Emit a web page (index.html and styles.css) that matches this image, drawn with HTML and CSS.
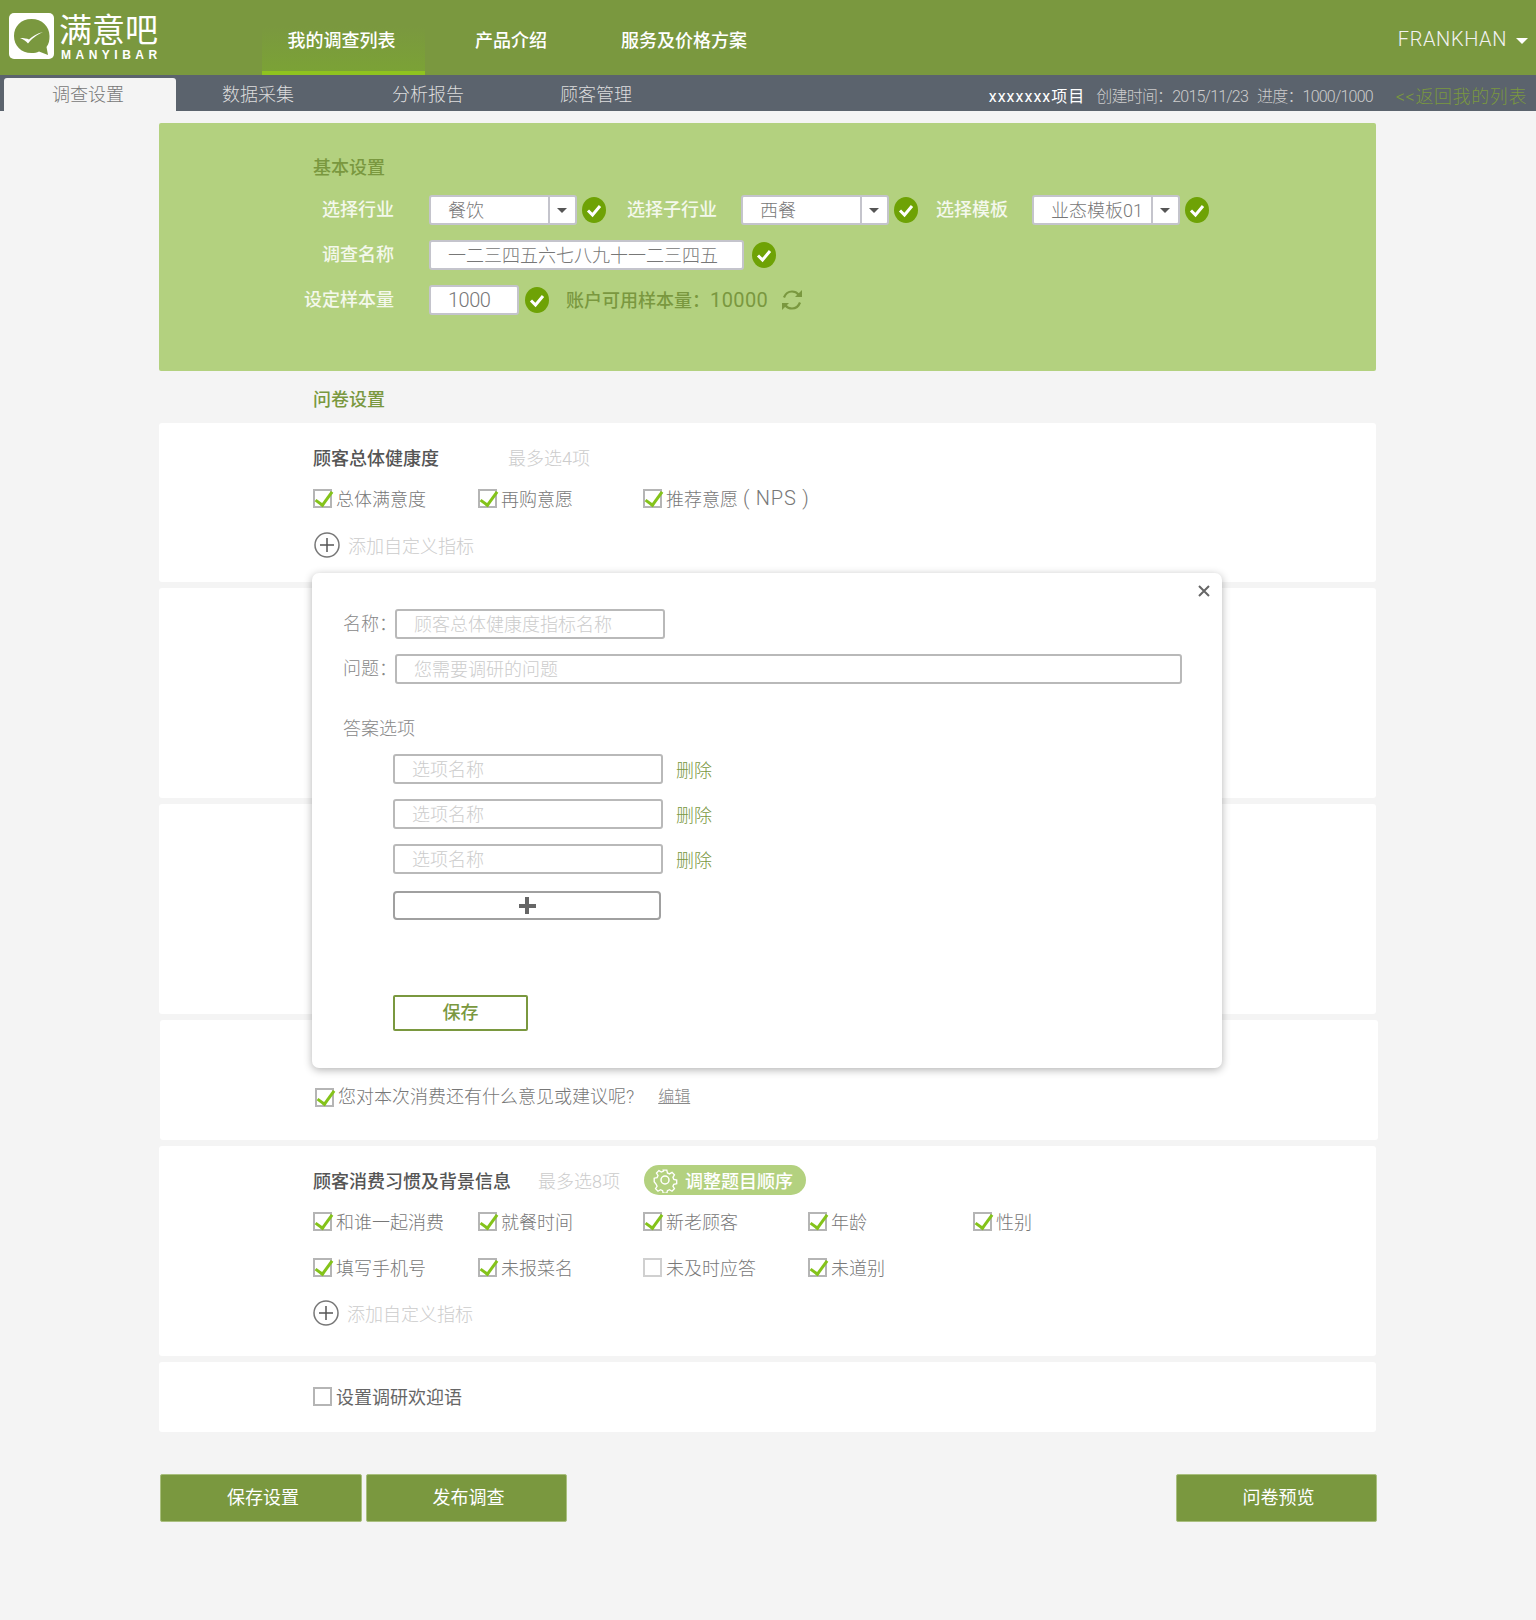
FILE: index.html
```html
<!DOCTYPE html>
<html>
<head lang="zh">
    <meta charset="UTF-8">
    <title>满意吧 - 调查设置</title>
    <link rel="stylesheet" href="styles.css">
</head>
<body>
    <div class="header">
        <div class="logo">
            <svg class="logo-icon" width="45" height="46" viewBox="0 0 45 46">
                <rect width="45" height="46" rx="5" fill="#fff"/>
                <path d="M22.500 6C12 6 5 13.500 5 23s7 17 17.500 17c3 0 5.500-.5 7.500-1.500l9 3.500-1.500-8C40 31 40.500 27 40.500 23 40.500 13.500 33 6 22.500 6z" fill="#7a983f"/>
                <path d="M11 25c3 1 6 3 8 5.500 4-5 8-8 15-11.500-6 1.500-10 4-14 7.500-2-1-5-1.500-9-1.500z" fill="#fff"/>
            </svg>
            <div class="logo-text">
                <div class="logo-cn">满意吧</div>
                <div class="logo-en">MANYIBAR</div>
            </div>
        </div>
        <ul class="nav">
            <li class="nav-item selected">我的调查列表</li>
            <li class="nav-item">产品介绍</li>
            <li class="nav-item">服务及价格方案</li>
        </ul>
        <div class="user">FRANKHAN<span class="user-caret"></span></div>
    </div>

    <div class="subnav">
        <ul class="tabs">
            <li class="tab selected">调查设置</li>
            <li class="tab">数据采集</li>
            <li class="tab">分析报告</li>
            <li class="tab">顾客管理</li>
        </ul>
        <div class="project">
            <span class="project-name">xxxxxxx项目</span>
            <span class="project-date">创建时间：2015/11/23</span>
            <span class="project-progress">进度：1000/1000</span>
            <span class="project-back">&lt;&lt;返回我的列表</span>
        </div>
    </div>

    <div class="main">
        <div class="basic">
            <div class="basic-title">基本设置</div>
            <div class="basic-row">
                <span class="field-label">选择行业</span>
                <div class="select"><span class="select-text">餐饮</span><span class="select-btn"></span></div>
                <svg class="ok" width="24" height="26" viewBox="0 0 24 26"><ellipse cx="12" cy="13" rx="12" ry="13" fill="#6ea205"/><path d="M6 13.500l4.500 4.500L18 9" fill="none" stroke="#fff" stroke-width="3"/></svg>
                <span class="field-label-inline sub">选择子行业</span>
                <div class="select"><span class="select-text">西餐</span><span class="select-btn"></span></div>
                <svg class="ok" width="24" height="26" viewBox="0 0 24 26"><ellipse cx="12" cy="13" rx="12" ry="13" fill="#6ea205"/><path d="M6 13.500l4.500 4.500L18 9" fill="none" stroke="#fff" stroke-width="3"/></svg>
                <span class="field-label-inline tpl">选择模板</span>
                <div class="select"><span class="select-text">业态模板01</span><span class="select-btn"></span></div>
                <svg class="ok" width="24" height="26" viewBox="0 0 24 26"><ellipse cx="12" cy="13" rx="12" ry="13" fill="#6ea205"/><path d="M6 13.500l4.500 4.500L18 9" fill="none" stroke="#fff" stroke-width="3"/></svg>
            </div>
            <div class="basic-row">
                <span class="field-label">调查名称</span>
                <div class="text-box name-box">一二三四五六七八九十一二三四五</div>
                <svg class="ok" width="24" height="26" viewBox="0 0 24 26"><ellipse cx="12" cy="13" rx="12" ry="13" fill="#6ea205"/><path d="M6 13.500l4.500 4.500L18 9" fill="none" stroke="#fff" stroke-width="3"/></svg>
            </div>
            <div class="basic-row">
                <span class="field-label">设定样本量</span>
                <div class="text-box size-box">1000</div>
                <svg class="ok" width="24" height="26" viewBox="0 0 24 26"><ellipse cx="12" cy="13" rx="12" ry="13" fill="#6ea205"/><path d="M6 13.500l4.500 4.500L18 9" fill="none" stroke="#fff" stroke-width="3"/></svg>
                <span class="available">账户可用样本量：<span class="available-num">10000</span></span>
                <svg class="refresh" width="22" height="24" viewBox="0 0 22 24">
                    <path d="M3 9.500C4.500 5.500 7.500 3.500 11 3.500c2.500 0 5 1 6.500 3" fill="none" stroke="#7a983f" stroke-width="2.200"/>
                    <path d="M21 2v7h-7z" fill="#7a983f"/>
                    <path d="M19 14.500c-1.500 4-4.500 6-8 6-2.500 0-5-1-6.500-3" fill="none" stroke="#7a983f" stroke-width="2.200"/>
                    <path d="M1 22v-7h7z" fill="#7a983f"/>
                </svg>
            </div>
        </div>

        <div class="section-title">问卷设置</div>

        <div class="card card-health">
            <div class="card-head">
                <span class="card-title">顾客总体健康度</span>
                <span class="card-hint hint-health">最多选4项</span>
            </div>
            <div class="checks">
                <span class="check on">总体满意度</span>
                <span class="check on">再购意愿</span>
                <span class="check on">推荐意愿<span class="nps">( NPS )</span></span>
            </div>
            <div class="add">
                <svg width="26" height="26" viewBox="0 0 26 26"><circle cx="13" cy="13" r="12" fill="none" stroke="#777" stroke-width="1.500"/><path d="M6 13h14M13 6v14" stroke="#555" stroke-width="1.500"/></svg>
                <span class="add-text">添加自定义指标</span>
            </div>
        </div>
        <div class="card card-blank"></div>
        <div class="card card-blank"></div>
        <div class="card card-open">
            <span class="check on">您对本次消费还有什么意见或建议呢?</span>
            <span class="edit">编辑</span>
        </div>
        <div class="card card-habit">
            <div class="card-head">
                <span class="card-title">顾客消费习惯及背景信息</span>
                <span class="card-hint hint-habit">最多选8项</span>
                <span class="pill">
                    <svg width="26" height="26" viewBox="0 0 26 26">
                        <path d="M11 2h4l.7 3.200 2.300 1 2.800-1.700 2.700 2.800-1.700 2.700 1 2.300 3.200.7v4l-3.200.7-1 2.300 1.700 2.700-2.700 2.800-2.800-1.700-2.300 1-.7 2.900h-4l-.7-2.900-2.300-1-2.800 1.700-2.700-2.800 1.700-2.700-1-2.300L1 15v-4l3.200-.7 1-2.300-1.700-2.700 2.700-2.800 2.800 1.700 2.300-1z" fill="none" stroke="#fff" stroke-width="1.500" transform="translate(1.300 1.300) scale(.9)"/>
                        <circle cx="13" cy="13" r="4" fill="none" stroke="#fff" stroke-width="1.500"/>
                    </svg>
                    调整题目顺序
                </span>
            </div>
            <div class="checks">
                <span class="check on">和谁一起消费</span>
                <span class="check on">就餐时间</span>
                <span class="check on">新老顾客</span>
                <span class="check on">年龄</span>
                <span class="check on">性别</span>
            </div>
            <div class="checks checks-second">
                <span class="check on">填写手机号</span>
                <span class="check on">未报菜名</span>
                <span class="check off">未及时应答</span>
                <span class="check on">未道别</span>
            </div>
            <div class="add add-habit">
                <svg width="26" height="26" viewBox="0 0 26 26"><circle cx="13" cy="13" r="12" fill="none" stroke="#777" stroke-width="1.500"/><path d="M6 13h14M13 6v14" stroke="#555" stroke-width="1.500"/></svg>
                <span class="add-text">添加自定义指标</span>
            </div>
        </div>
        <div class="card card-welcome">
            <span class="check plain">设置调研欢迎语</span>
        </div>

        <div class="actions">
            <div class="btn">保存设置</div>
            <div class="btn">发布调查</div>
            <div class="btn btn-right">问卷预览</div>
        </div>
    </div>

    <div class="modal">
        <svg class="modal-close" width="12" height="12" viewBox="0 0 12 12"><path d="M1 1l10 10M11 1L1 11" stroke="#666" stroke-width="2"/></svg>
        <div class="modal-row">
            <span class="modal-label">名称：</span>
            <div class="modal-input short">顾客总体健康度指标名称</div>
        </div>
        <div class="modal-row">
            <span class="modal-label">问题：</span>
            <div class="modal-input long">您需要调研的问题</div>
        </div>
        <div class="modal-sub">答案选项</div>
        <div class="option">
            <div class="modal-input short">选项名称</div>
            <span class="option-del">删除</span>
        </div>
        <div class="option">
            <div class="modal-input short">选项名称</div>
            <span class="option-del">删除</span>
        </div>
        <div class="option">
            <div class="modal-input short">选项名称</div>
            <span class="option-del">删除</span>
        </div>
        <div class="option-add"><span class="plus"></span></div>
        <div class="save">保存</div>
    </div>
</body>
</html>
```

FILE: styles.css
```css
*,*::before,*::after{
    margin: 0;
    padding: 0;
    box-sizing: border-box;
}
ul{
    list-style: none;
}
html,body{
    height: 1620px;
}
body{
    background: #f4f4f4;
    font-family: Roboto, "Noto Sans CJK SC", sans-serif;
    font-weight: 300;
    font-size: 18px;
    color: #777;
    position: relative;
    overflow: hidden;
}

/* header */
.header{
    height: 75px;
    background: #7a983f;
    display: flex;
    position: relative;
}
.logo{
    display: flex;
    padding: 13px 0 0 9px;
    width: 262px;
}
.logo-icon{
    flex: none;
}
.logo-text{
    margin-left: 5px;
    color: #fff;
    margin-top: -4px;
}
.logo-cn{
    font-size: 33px;
    line-height: 44px;
    font-weight: 400;
    white-space: nowrap;
}
.logo-en{
    font-size: 12px;
    line-height: 14px;
    font-weight: 700;
    letter-spacing: 4.500px;
    margin-top: -5px;
    padding-left: 2px;
    font-family: "Liberation Sans", sans-serif;
}
.nav{
    display: flex;
    height: 75px;
}
.nav-item{
    color: #fff;
    font-weight: 500;
    line-height: 82px;
    white-space: nowrap;
    margin-right: 74px;
}
.nav-item.selected{
    width: 163px;
    margin: 26px 50px 0 0;
    height: 49px;
    line-height: 30px;
    text-align: center;
    padding-right: 4px;
    background: linear-gradient(#7a983f, #7ba236);
    border-bottom: 4px solid #8fc31f;
}
.user{
    position: absolute;
    right: 8px;
    top: 25px;
    color: #f2f2f2;
    font-size: 20px;
    letter-spacing: .6px;
    line-height: 28px;
    display: flex;
    align-items: center;
}
.user-caret{
    margin-left: 9px;
    margin-top: 4px;
    border-left: 6px solid transparent;
    border-right: 6px solid transparent;
    border-top: 6px solid #fff;
}

/* sub nav */
.subnav{
    height: 36px;
    background: #5b636d;
    display: flex;
    justify-content: space-between;
    padding: 3px 9px 0 4px;
}
.tabs{
    display: flex;
}
.tab{
    width: 170px;
    text-align: center;
    color: #ddd;
    line-height: 33px;
}
.tab:last-child{
    width: 166px;
}
.tab.selected{
    width: 172px;
    padding-right: 4px;
    background: #f4f4f4;
    color: #777;
    border-radius: 3px 3px 0 0;
}
.tab.selected + .tab{
    margin-left: -3px;
}
.project{
    display: flex;
    align-items: center;
    height: 33px;
    font-size: 16px;
    color: #ccc;
    white-space: nowrap;
}
.project-name{
    color: #fff;
    font-weight: 400;
    letter-spacing: 1px;
    margin-right: 11px;
}
.project-date{
    letter-spacing: -.8px;
    margin-right: 9px;
}
.project-progress{
    letter-spacing: -.8px;
    margin-right: 23px;
}
.project-back{
    font-size: 18px;
    letter-spacing: .6px;
    color: #7a983f;
}

/* main */
.main{
    width: 1217px;
    margin-left: 159px;
    padding-top: 12px;
}
.basic{
    height: 248px;
    background: #b3d17f;
    border-radius: 2px;
    padding-top: 32px;
}
.basic-title{
    padding-left: 154px;
    color: #7a983f;
    font-weight: 500;
    line-height: 25px;
    margin-bottom: 15px;
}
.basic-row{
    display: flex;
    align-items: center;
    height: 30px;
    line-height: 30px;
    margin-bottom: 15px;
}
.field-label{
    width: 235px;
    text-align: right;
    margin-right: 35px;
    color: #f4f8ec;
    font-weight: 500;
}
.field-label-inline{
    color: #f4f8ec;
    font-weight: 500;
    white-space: nowrap;
}
.sub{
    margin: 0 24px 0 21px;
}
.tpl{
    margin: 0 24px 0 18px;
}
.select{
    width: 148px;
    height: 30px;
    background: #fff;
    border: 2px solid #c4c4cc;
    border-radius: 3px;
    display: flex;
    line-height: 27px;
}
.select-text{
    flex: 1;
    padding-left: 17px;
    white-space: nowrap;
    overflow: hidden;
}
.select-btn{
    width: 27px;
    border-left: 2px solid #c4c4cc;
    position: relative;
}
.select-btn::after{
    content: "";
    position: absolute;
    left: 7px;
    top: 11px;
    border-left: 5px solid transparent;
    border-right: 5px solid transparent;
    border-top: 5px solid #555;
}
.ok{
    margin-left: 5px;
    flex: none;
}
.text-box{
    height: 30px;
    background: #fff;
    border: 2px solid #c4c4cc;
    border-radius: 3px;
    line-height: 27px;
    padding-left: 17px;
    white-space: nowrap;
}
.name-box{
    width: 315px;
    margin-right: 3px;
}
.size-box{
    width: 90px;
    margin-right: 1px;
    font-size: 20px;
    letter-spacing: -.5px;
}
.available{
    margin-left: 17px;
    color: #7a983f;
    font-weight: 500;
    white-space: nowrap;
}
.available-num{
    font-size: 20px;
    font-weight: 400;
    letter-spacing: .4px;
}
.refresh{
    margin-left: 13px;
}
.section-title{
    padding-left: 154px;
    height: 52px;
    line-height: 58px;
    color: #7a983f;
    font-weight: 500;
}

/* cards */
.card{
    background: #fff;
    border-radius: 3px;
    margin-bottom: 6px;
    padding-left: 154px;
}
.card-head{
    display: flex;
    align-items: center;
    height: 30px;
}
.card-title{
    color: #555;
    font-weight: 500;
    white-space: nowrap;
}
.card-hint{
    color: #ccc;
    white-space: nowrap;
}
.hint-health{
    margin-left: 69px;
}
.hint-habit{
    margin-left: 27px;
}
.card-health{
    height: 159px;
    padding-top: 19px;
}
.card-blank{
    height: 210px;
}
.card-open{
    height: 120px;
    width: 1218px;
    margin-left: 1px;
    padding: 61px 0 0 155px;
    display: flex;
    align-items: flex-start;
    line-height: 32px;
}
.card-habit{
    height: 210px;
    padding-top: 19px;
}
.card-welcome{
    height: 70px;
    padding-top: 18px;
}
.checks{
    display: flex;
    margin-top: 10px;
}
.checks-second{
    margin-top: 14px;
}
.check{
    display: flex;
    align-items: center;
    height: 32px;
    padding-left: 23px;
    position: relative;
    white-space: nowrap;
}
.checks .check{
    width: 165px;
}
.nps{
    margin-left: 5px;
    font-size: 20px;
    letter-spacing: .8px;
}
.check::before{
    content: "";
    position: absolute;
    left: 0;
    top: 7px;
    width: 19px;
    height: 19px;
    border: 2px solid #b5b5b5;
    background: #fff;
}
.check.off::before{
    border-color: #d0d0d0;
}
.check.on::after{
    content: "";
    position: absolute;
    left: 6px;
    top: 6px;
    width: 10px;
    height: 18px;
    border-right: 3px solid #84c31a;
    border-bottom: 3px solid #84c31a;
    transform: rotate(36deg);
}
.plain{
    color: #666;
    font-weight: 400;
}
.edit{
    margin-left: 24px;
    font-size: 16px;
    color: #888;
    text-decoration: underline;
}
.add{
    display: flex;
    align-items: center;
    height: 30px;
    margin-top: 16px;
    padding-left: 1px;
}
.add-habit{
    margin-top: 15px;
    padding-left: 0;
}
.add-text{
    margin-left: 8px;
    color: #ccc;
    white-space: nowrap;
}
.pill{
    margin-left: 24px;
    width: 162px;
    height: 30px;
    border-radius: 15px;
    background: #b3d17f;
    color: #fff;
    font-weight: 500;
    display: flex;
    align-items: center;
    padding-left: 8px;
    white-space: nowrap;
}
.pill svg{
    margin-right: 7px;
    flex: none;
}

/* bottom buttons */
.actions{
    display: flex;
    width: 1218px;
    padding: 36px 0 0 1px;
    gap: 4px;
}
.btn{
    width: 201px;
    height: 48px;
    background: #7a983f;
    border: 1px solid #a9bf7e;
    border-radius: 2px;
    color: #fff;
    font-weight: 400;
    line-height: 46px;
    text-align: center;
    padding-left: 4px;
}
.btn:first-child{
    width: 202px;
}
.btn-right{
    margin-left: auto;
}

/* modal over the cards */
.modal{
    position: absolute;
    left: 312px;
    top: 573px;
    width: 910px;
    height: 495px;
    background: #fff;
    border-radius: 7px;
    box-shadow: 0 2px 9px rgba(0,0,0,.3);
    padding: 36px 0 0 31px;
}
.modal-close{
    position: absolute;
    right: 12px;
    top: 12px;
}
.modal-row{
    display: flex;
    align-items: center;
    height: 30px;
    margin-bottom: 15px;
}
.modal-label{
    width: 52px;
    color: #888;
    line-height: 28px;
    white-space: nowrap;
}
.modal-input{
    height: 30px;
    border: 2px solid #b9b9b9;
    border-radius: 3px;
    line-height: 27px;
    padding-left: 17px;
    color: #ccc;
    white-space: nowrap;
}
.short{
    width: 270px;
}
.long{
    width: 787px;
}
.modal-sub{
    margin-top: 30px;
    line-height: 30px;
    color: #888;
}
.option{
    display: flex;
    align-items: center;
    height: 30px;
    margin: 10px 0 0 50px;
}
.option + .option{
    margin-top: 15px;
}
.option-del{
    margin-left: 13px;
    color: #7a983f;
}
.option-add{
    width: 268px;
    height: 29px;
    margin: 17px 0 0 50px;
    border: 2px solid #a0a0a0;
    border-radius: 4px;
    display: flex;
    align-items: center;
    justify-content: center;
}
.plus{
    width: 17px;
    height: 17px;
    background: linear-gradient(#666, #666) center / 17px 4px no-repeat, linear-gradient(#666, #666) center / 4px 17px no-repeat;
}
.save{
    width: 135px;
    height: 36px;
    margin: 75px 0 0 50px;
    border: 2px solid #7a983f;
    border-radius: 2px;
    color: #7a983f;
    font-weight: 500;
    text-align: center;
    line-height: 32px;
}
```
